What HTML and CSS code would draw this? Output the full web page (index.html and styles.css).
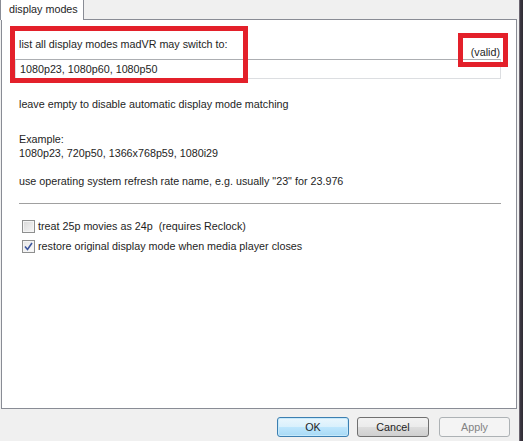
FILE: index.html
```html
<!DOCTYPE html>
<html>
<head>
<meta charset="utf-8">
<link rel="stylesheet" href="styles.css">
</head>
<body>
<div class="window">
  <div class="main">
    <div class="tabstrip">
      <div class="tab">display modes</div>
    </div>
    <div class="panel">
      <div class="head-row">
        <span class="label">list all display modes madVR may switch to:</span>
        <span class="valid">(valid)</span>
      </div>
      <div class="input">1080p23, 1080p60, 1080p50</div>
      <p class="txt first">leave empty to disable automatic display mode matching</p>
      <p class="txt example">Example:</p>
      <p class="txt">1080p23, 720p50, 1366x768p59, 1080i29</p>
      <p class="txt hint">use operating system refresh rate name, e.g. usually "23" for 23.976</p>
      <div class="sep"></div>
      <label class="check-row first-check"><span class="box"></span><span>treat 25p movies as 24p&nbsp; (requires Reclock)</span></label>
      <label class="check-row"><span class="box checked"><svg width="9" height="9" viewBox="0 0 9 9"><path d="M1 4.5 L3.5 7.5 L8 1" fill="none" stroke="#3b559e" stroke-width="1.6"/></svg></span><span>restore original display mode when media player closes</span></label>
      <div class="mark mark-list"></div>
      <div class="mark mark-valid"></div>
    </div>
    <div class="footer">
      <button class="btn ok">OK</button>
      <button class="btn">Cancel</button>
      <button class="btn apply" disabled>Apply</button>
    </div>
  </div>
  <div class="edge"></div>
</div>
</body>
</html>
```

FILE: styles.css
```css
* { box-sizing: border-box; }
html, body { margin: 0; padding: 0; }
body {
  width: 523px;
  height: 441px;
  overflow: hidden;
  background: #f0f0f0;
  font-family: "Liberation Sans", Arial, sans-serif;
  font-size: 10.75px;
  color: #1e1e1e;
}
.window { display: flex; height: 441px; }
.main { width: 519px; display: flex; flex-direction: column; }
.edge {
  width: 4px;
  background: linear-gradient(to right, #6b6570 0, #6b6570 1px, #3e3944 1px, #2f2b33 100%);
}
.tabstrip { height: 19px; display: flex; }
.tab {
  width: 84px;
  height: 20px;
  background: #fff;
  border: 1px solid #898c95;
  border-bottom: none;
  border-top: none;
  padding: 2px 0 0 8px;
  position: relative;
  z-index: 2;
  line-height: 14px;
}
.panel {
  position: relative;
  margin-left: 1px;
  width: 516px;
  height: 390px;
  background: #fff;
  border: 1px solid #898c95;
  padding: 17px 13px 0 13px;
}
.head-row {
  display: flex;
  justify-content: space-between;
  height: 21px;
  margin-bottom: 1px;
}
.label { align-self: flex-start; margin-left: 4px; line-height: 14px; }
.valid { align-self: flex-end; margin-right: 3px; line-height: 14px; margin-bottom: -1px; }
.input {
  width: 486px;
  height: 20px;
  border: 1px solid #dcdee1;
  border-top-color: #acaeb2;
  padding-left: 4px;
  line-height: 18px;
}
.txt { margin: 0 0 0 4px; line-height: 14px; }
.txt.first { margin-top: 18px; }
.txt.example { margin-top: 21px; }
.txt.hint { margin-top: 14px; }
.sep {
  margin: 15px 0 0 4px;
  width: 482px;
  height: 1px;
  background: #a0a0a0;
}
.check-row {
  display: flex;
  align-items: center;
  gap: 3px;
  margin-left: 7px;
  height: 13px;
  line-height: 13px;
}
.first-check { margin-top: 16px; }
.check-row + .check-row { margin-top: 7px; }
.box {
  width: 13px;
  height: 13px;
  border: 1px solid #8e8f8f;
  background: linear-gradient(135deg, #d8d8d8 0%, #f6f6f6 100%);
  box-shadow: inset 0 0 0 1px #f4f4f4;
  display: flex;
  align-items: center;
  justify-content: center;
}
.box.checked { background: linear-gradient(135deg, #e6e6e6 0%, #fbfbfb 100%); }
.mark {
  position: absolute;
  border: 5px solid #e3202a;
  pointer-events: none;
}
.mark-list { left: 8px; top: 6px; width: 238px; height: 57px; }
.mark-valid { left: 456px; top: 13px; width: 50px; height: 34px; }
.footer {
  flex: 1;
  display: flex;
  justify-content: flex-end;
  align-items: flex-start;
  padding: 8px 9px 0 0;
  gap: 8px;
}
.btn {
  width: 72px;
  height: 20px;
  font-family: inherit;
  font-size: 10.75px;
  color: #1e1e1e;
  border: 1px solid #707070;
  border-radius: 3px;
  background: linear-gradient(to bottom, #f2f2f2 0%, #ebebeb 50%, #dddddd 51%, #cfcfcf 100%);
  padding: 0;
}
.btn.ok {
  border-color: #3c7fb1;
  background: linear-gradient(to bottom, #eaf6fd 0%, #d9f0fc 50%, #bee6fd 51%, #a7d9f5 100%);
  box-shadow: inset 0 0 0 1px #c6e9fb;
}
.btn.apply {
  width: 71px;
  margin-left: 2px;
  color: #838383;
  border-color: #adb2b5;
  background: #f4f4f4;
}
```
